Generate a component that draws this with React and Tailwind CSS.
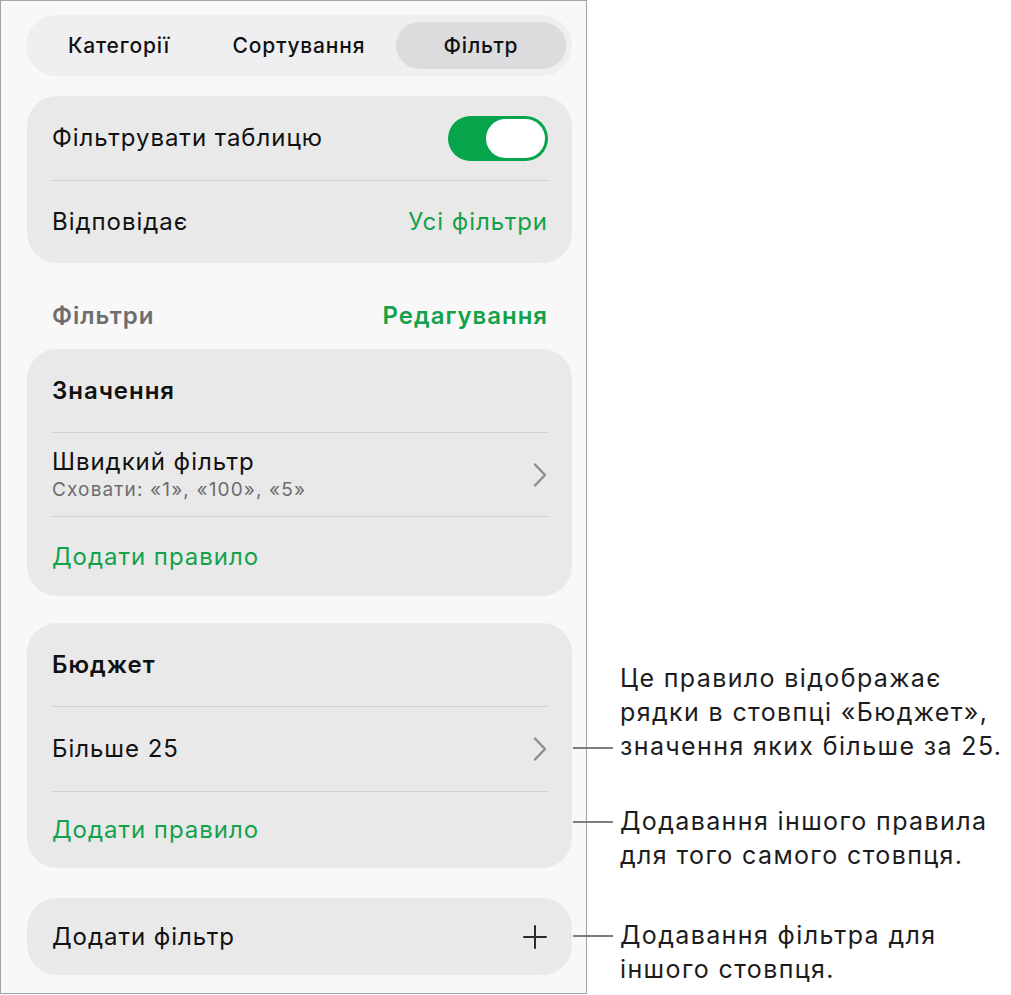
const green = "text-[#13a24b]";

function Chevron() {
  return (
    <svg width="16" height="26" viewBox="0 0 16 26" fill="none" className="shrink-0">
      <path d="M3 2.5 L13 13 L3 23.5" stroke="#8d8d8f" strokeWidth="2.4" strokeLinecap="round" strokeLinejoin="round" />
    </svg>
  );
}

function Plus() {
  return (
    <svg width="24" height="24" viewBox="0 0 24 24" fill="none" className="shrink-0">
      <path d="M12 1 V23 M1 12 H23" stroke="#2b2b2b" strokeWidth="2" strokeLinecap="round" />
    </svg>
  );
}

function Toggle() {
  return (
    <div className="w-[100px] h-[45px] rounded-full bg-[#06a54b] p-[3px] flex justify-end">
      <div className="w-[59px] h-[39px] rounded-full bg-white" />
    </div>
  );
}

function Divider() {
  return <div className="mx-[25px] mr-[24px] h-px bg-[#d2d2d4]" />;
}

function Card({ children, className = "" }) {
  return <div className={`rounded-[30px] bg-[#e9e9ea] text-[24px] tracking-[0.04em] ${className}`}>{children}</div>;
}

function Row({ h, children }) {
  return <div className={`flex items-center justify-between pl-[25px] pr-[24px] ${h}`}>{children}</div>;
}

function Callout({ lineAt, lines }) {
  return (
    <div className="flex items-start">
      <div className={`w-[40px] h-[1.5px] bg-[#7d7d7d] shrink-0 ${lineAt}`} />
      <div className="ml-[7px] text-[25px] leading-[34px] tracking-[0.055em] text-[#1c1c1e]">
        {lines.map((l) => (
          <div key={l} className="whitespace-nowrap">{l}</div>
        ))}
      </div>
    </div>
  );
}

export default function App() {
  return (
    <div className="flex bg-white min-h-[995px] font-['Inter','Noto_Sans',sans-serif] text-[#111]">
      {/* Filter panel */}
      <div className="w-[587px] h-[994px] shrink-0 border border-[#a3a3a3] bg-[#f8f8f8] pl-[25px] pr-[14px] pt-[14px]">
        <div className="h-[61px] rounded-full bg-[#efeff1] flex items-center px-[6px] text-[21px] tracking-[0.04em] font-medium">
          <div className="w-[174px] text-center">Категорії</div>
          <div className="w-[186px] text-center">Сортування</div>
          <div className="flex-1 h-[47px] ml-[4px] rounded-full bg-[#dcdcdf] flex items-center justify-center">Фільтр</div>
        </div>

        <Card className="mt-[20px] ml-px">
          <Row h="h-[84px]">
            <span>Фільтрувати таблицю</span>
            <Toggle />
          </Row>
          <Divider />
          <Row h="h-[82px]">
            <span>Відповідає</span>
            <span className={green}>Усі фільтри</span>
          </Row>
        </Card>

        <div className="h-[86px] pt-[20px] flex items-center justify-between pl-[26px] pr-[24px] text-[24px] tracking-[0.04em] font-semibold">
          <span className="text-[#6e6e70]">Фільтри</span>
          <span className={green}>Редагування</span>
        </div>

        <Card className="ml-px">
          <Row h="h-[83px]">
            <span className="font-semibold">Значення</span>
          </Row>
          <Divider />
          <Row h="h-[83px]">
            <div className="flex flex-col pt-[1px]">
              <span className="leading-[30px]">Швидкий фільтр</span>
              <span className="text-[19px] leading-[26px] tracking-[0.06em] text-[#6c6c6e]">Сховати: «1», «100», «5»</span>
            </div>
            <Chevron />
          </Row>
          <Divider />
          <Row h="h-[79px]">
            <span className={green}>Додати правило</span>
          </Row>
        </Card>

        <Card className="mt-[27px] ml-px">
          <Row h="h-[83px]">
            <span className="font-semibold">Бюджет</span>
          </Row>
          <Divider />
          <Row h="h-[84px]">
            <span>Більше 25</span>
            <Chevron />
          </Row>
          <Divider />
          <Row h="h-[76px]">
            <span className={green}>Додати правило</span>
          </Row>
        </Card>

        <Card className="mt-[30px] ml-px">
          <Row h="h-[77px]">
            <span>Додати фільтр</span>
            <span className="pr-px">
              <Plus />
            </span>
          </Row>
        </Card>
      </div>

      {/* Annotations */}
      <div className="-ml-[14px] pt-[661px] flex flex-col">
        <Callout
          lineAt="mt-[86px]"
          lines={["Це правило відображає", "рядки в стовпці «Бюджет»,", "значення яких більше за 25."]}
        />
        <div className="mt-[41px]">
          <Callout lineAt="mt-[17px]" lines={["Додавання іншого правила", "для того самого стовпця."]} />
        </div>
        <div className="mt-[46px]">
          <Callout lineAt="mt-[17px]" lines={["Додавання фільтра для", "іншого стовпця."]} />
        </div>
      </div>
    </div>
  );
}
